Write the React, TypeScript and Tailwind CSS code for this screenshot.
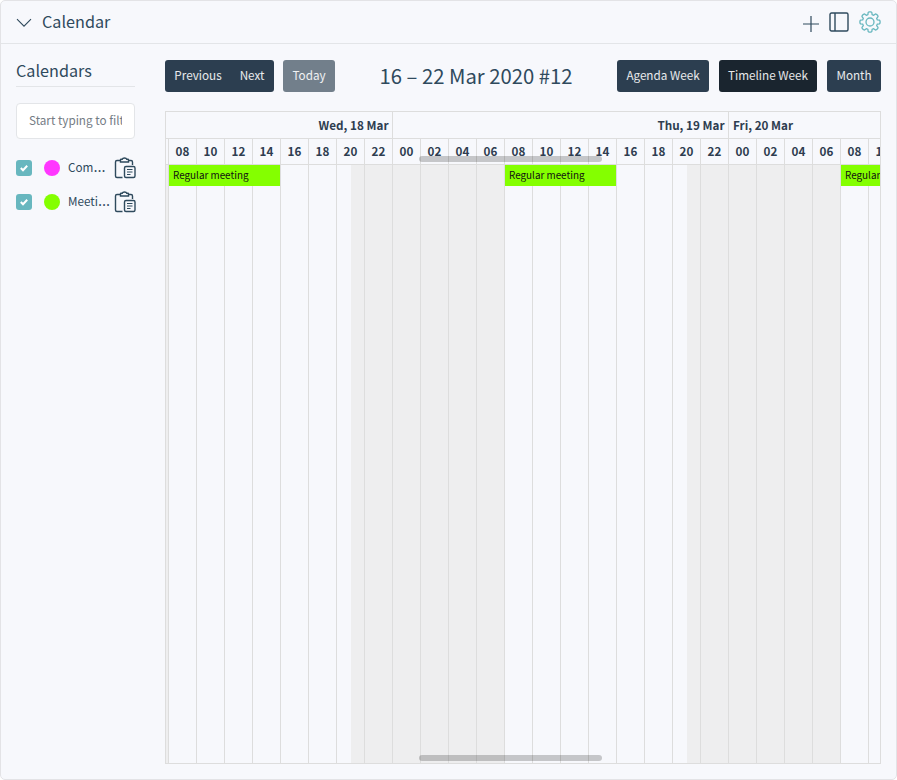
import React from 'react';

const HOURS = ['08', '10', '12', '14', '16', '18', '20', '22', '00', '02', '04', '06', '08', '10', '12', '14', '16', '18', '20', '22', '00', '02', '04', '06', '08', '10'];

const CALENDARS = [
  { name: 'Com', dot: 'bg-[#ff37ff]' },
  { name: 'Meeti', dot: 'bg-[#84ff00]' },
];

function ClipboardIcon() {
  return (
    <svg width="22" height="22" viewBox="0 0 22 22" fill="none" stroke="#2f4a5d" strokeWidth="1.4" className="shrink-0">
      <path d="M6.500 3.500H3A1.500 1.500 0 0 0 1.500 5v14A1.500 1.500 0 0 0 3 20.500h5.500M14.500 3.500H17A1.500 1.500 0 0 1 18.500 5v3" />
      <path d="M6.500 5V2.800a.6.6 0 0 1 .6-.6h1.200C8.500 1.400 9.300 1 10.500 1s2 .4 2.200 1.200h1.200a.6.6 0 0 1 .6.6V5z" />
      <rect x="10.500" y="9.500" width="10.500" height="11" rx="1.500" />
      <path d="M13 12.500h5.500M13 15h5.500M13 17.500h3.500" strokeWidth="1.200" />
    </svg>
  );
}

// Closed outline with eight flared teeth, rounded by the line join.
const GEAR_OUTLINE = Array.from({ length: 8 }, (_, tooth) =>
  [
    [-16, 7.6],
    [-11, 9.7],
    [-5, 10.1],
    [5, 10.1],
    [11, 9.7],
    [16, 7.6],
  ].map(([offset, radius]) => {
    const angle = ((tooth * 45 + offset) * Math.PI) / 180;
    return `${(11 + radius * Math.sin(angle)).toFixed(2)},${(11 - radius * Math.cos(angle)).toFixed(2)}`;
  }).join(' ')
).join(' ');

function GearIcon() {
  return (
    <svg width="22" height="22" viewBox="0 0 22 22" fill="none" stroke="#68b7bf" strokeWidth="1.300" strokeLinejoin="round">
      <circle cx="11" cy="11" r="4" />
      <polygon points={GEAR_OUTLINE} />
    </svg>
  );
}

function MeetingEvent({ place }: { place: string }) {
  return (
    <div className={`absolute top-0 h-[21px] w-[111px] overflow-hidden whitespace-nowrap bg-[#84ff00] pl-1 text-[9.9px] leading-[20px] text-[#111] ${place}`}>
      Regular meeting
    </div>
  );
}

function ScrollThumb({ place }: { place: string }) {
  return <div className={`absolute left-[253px] h-[6px] w-[183px] rounded-full bg-black/20 ${place}`} />;
}

function Timeline() {
  return (
    <div className="relative flex h-[653px] flex-col overflow-hidden border border-[#ddd]">
      <div className="flex h-[27px] shrink-0 border-b border-[#ddd] text-[11.7px] font-bold leading-[26px] text-[#2e3d50]">
        <div className="w-[227px] shrink-0 border-r border-[#ddd] pr-[3.500px] text-right">Wed, 18 Mar</div>
        <div className="w-[336px] shrink-0 border-r border-[#ddd] pr-[3.500px] text-right">Thu, 19 Mar</div>
        <div className="pl-1">Fri, 20 Mar</div>
      </div>
      <div className="flex h-[26px] shrink-0 border-b border-[#ddd] pl-[2px] text-[11.7px] font-bold leading-[24px] text-[#2e3d50]">
        {HOURS.map((h, i) => (
          <div key={i} className="w-7 shrink-0 border-l border-[#ddd] text-center">{h}</div>
        ))}
      </div>
      <div className="relative flex grow pl-[2px]">
        <div className="absolute inset-y-0 left-0 w-[2px] bg-[#eeeeef]" />
        <div className="absolute inset-y-0 left-[185px] w-[154px] bg-[#eeeeef]" />
        <div className="absolute inset-y-0 left-[521px] w-[154px] bg-[#eeeeef]" />
        {HOURS.map((_, i) => (
          <div key={i} className="relative w-7 shrink-0 border-l border-[#ddd]" />
        ))}
        <MeetingEvent place="left-[3px]" />
        <MeetingEvent place="left-[339px]" />
        <MeetingEvent place="left-[675px]" />
      </div>
      <ScrollThumb place="top-[44px]" />
      <ScrollThumb place="bottom-[2px]" />
    </div>
  );
}

const button = 'h-8 rounded-[3px] text-center text-[11.7px] leading-[30px] pb-[3px] whitespace-nowrap text-white/90';

export default function App() {
  return (
    <div className="h-[780px] w-[897px] bg-white font-['Noto_Sans_CJK_SC',sans-serif] text-[#2f4a5d]">
      <div className="flex h-full flex-col rounded-[5px] border border-[#e3e3e6] bg-[#f7f8fc]">
        <header className="flex h-[43px] shrink-0 items-center border-b border-[#e3e5e8] px-[15px]">
          <svg width="16" height="16" viewBox="0 0 16 16" fill="none" stroke="#2f4a5d" strokeWidth="1.100">
            <path d="M1 5.200l7 7 7-7" />
          </svg>
          <h2 className="ml-[10px] pb-[2px] text-[16.2px] leading-6">Calendar</h2>
          <div className="ml-auto flex items-center">
            <svg width="16" height="16" viewBox="0 0 16 16" stroke="#2f4a5d" strokeWidth="1.200" className="mt-[3px]">
              <path d="M0 8h16M8 0v16" />
            </svg>
            <svg width="20" height="20" viewBox="0 0 20 20" fill="none" stroke="#2f4a5d" strokeWidth="1.400" className="ml-[10px]">
              <rect x="1" y="1" width="18" height="18" rx="1.500" />
              <path d="M6 1v18" />
            </svg>
            <div className="ml-[10px]"><GearIcon /></div>
          </div>
        </header>
        <main className="flex grow">
          <aside className="ml-[15px] w-[119px] shrink-0 pt-[15px]">
            <h3 className="h-[28px] border-b border-[#e3e5e8] text-[16.2px] leading-[22px]">Calendars</h3>
            <div className="mt-4 h-9 rounded-[4px] border border-[#e3e5e8] bg-white px-3 text-[11.7px] leading-[32px] text-[#747c84]">
              <div className="overflow-hidden whitespace-nowrap">Start typing to filter</div>
            </div>
            <ul className="mt-[12px]">
              {CALENDARS.map((c) => (
                <li key={c.name} className="flex h-[34px] items-center">
                  <span className="flex size-4 shrink-0 items-center justify-center rounded-[3px] bg-[#68b7bf]">
                    <svg width="8" height="8" viewBox="0 0 8 8"><path d="M.8 4l2.200 2.200 4.200-4.400" fill="none" stroke="#fff" strokeWidth="2" /></svg>
                  </span>
                  <span className={`ml-3 size-4 shrink-0 rounded-full ${c.dot}`} />
                  <span className="ml-2 w-[43px] shrink-0 whitespace-nowrap pb-[2px] text-[11.7px] leading-5">
                    {c.name}<span className="font-['Open_Sans'] text-[15.500px] leading-none">…</span>
                  </span>
                  <span className="ml-[3px]"><ClipboardIcon /></span>
                </li>
              ))}
            </ul>
          </aside>
          <section className="ml-[30px] w-[716px] shrink-0 pt-4">
            <div className="mb-[19px] flex h-8">
              <div className="flex rounded-[3px] bg-[#2c3e50]">
                <button className={`w-[65px] pl-px ${button}`}>Previous</button>
                <button className={`w-11 ${button}`}>Next</button>
              </div>
              <button className={`ml-[9px] w-[52px] bg-[#727f8b] ${button}`}>Today</button>
              <h2 className="grow text-center text-[20.250px] leading-[31px]">16 – 22 Mar 2020 #12</h2>
              <button className={`w-[92px] bg-[#2c3e50] ${button}`}>Agenda Week</button>
              <button className={`ml-[10px] w-[98px] bg-[#1a252f] ${button}`}>Timeline Week</button>
              <button className={`ml-[10px] w-[54px] bg-[#2c3e50] ${button}`}>Month</button>
            </div>
            <Timeline />
          </section>
        </main>
      </div>
    </div>
  );
}
